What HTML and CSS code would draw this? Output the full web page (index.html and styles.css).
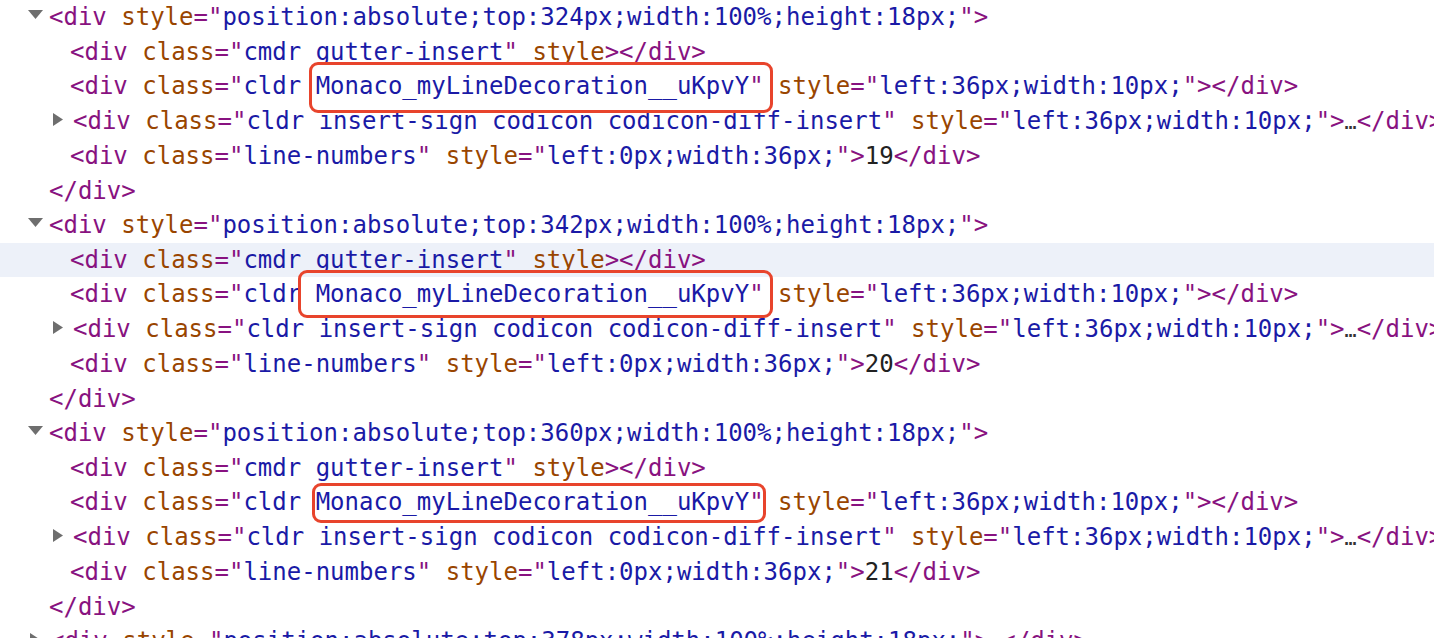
FILE: index.html
```html
<!DOCTYPE html>
<html>
<head>
    <title>Elements</title>
    <link rel="stylesheet" href="styles.css">
</head>
<body>
    <div class="tree">
        <div class="row l0"><span class="tri down"><svg width="15" height="9" viewBox="0 0 15 9"><polygon points="0,0 15,0 7.5,9"/></svg></span><span class="t">&lt;div </span><span class="an">style</span><span class="t">="</span><span class="av">position:absolute;top:324px;width:100%;height:18px;</span><span class="t">"&gt;</span></div>
        <div class="row l1"><span class="t">&lt;div </span><span class="an">class</span><span class="t">="</span><span class="av">cmdr gutter-insert</span><span class="t">"</span> <span class="an">style</span><span class="t">&gt;&lt;/div&gt;</span></div>
        <div class="row l1"><span class="t">&lt;div </span><span class="an">class</span><span class="t">="</span><span class="av">cldr </span><span class="mark m1"><span class="av">Monaco_myLineDecoration__uKpvY</span><span class="t">"</span></span> <span class="an">style</span><span class="t">="</span><span class="av">left:36px;width:10px;</span><span class="t">"&gt;&lt;/div&gt;</span></div>
        <div class="row l1x"><span class="tri right"><svg width="10" height="13" viewBox="0 0 10 13"><polygon points="0,0 10,6.5 0,13"/></svg></span><span class="t">&lt;div </span><span class="an">class</span><span class="t">="</span><span class="av">cldr insert-sign codicon codicon-diff-insert</span><span class="t">"</span> <span class="an">style</span><span class="t">="</span><span class="av">left:36px;width:10px;</span><span class="t">"&gt;</span><span class="dots">…</span><span class="t">&lt;/div&gt;</span></div>
        <div class="row l1"><span class="t">&lt;div </span><span class="an">class</span><span class="t">="</span><span class="av">line-numbers</span><span class="t">"</span> <span class="an">style</span><span class="t">="</span><span class="av">left:0px;width:36px;</span><span class="t">"&gt;</span><span class="tx">19</span><span class="t">&lt;/div&gt;</span></div>
        <div class="row l0"><span class="t">&lt;/div&gt;</span></div>

        <div class="row l0"><span class="tri down"><svg width="15" height="9" viewBox="0 0 15 9"><polygon points="0,0 15,0 7.5,9"/></svg></span><span class="t">&lt;div </span><span class="an">style</span><span class="t">="</span><span class="av">position:absolute;top:342px;width:100%;height:18px;</span><span class="t">"&gt;</span></div>
        <div class="row l1 hover"><span class="t">&lt;div </span><span class="an">class</span><span class="t">="</span><span class="av">cmdr gutter-insert</span><span class="t">"</span> <span class="an">style</span><span class="t">&gt;&lt;/div&gt;</span></div>
        <div class="row l1"><span class="t">&lt;div </span><span class="an">class</span><span class="t">="</span><span class="av">cldr </span><span class="mark m2"><span class="av">Monaco_myLineDecoration__uKpvY</span><span class="t">"</span></span> <span class="an">style</span><span class="t">="</span><span class="av">left:36px;width:10px;</span><span class="t">"&gt;&lt;/div&gt;</span></div>
        <div class="row l1x"><span class="tri right"><svg width="10" height="13" viewBox="0 0 10 13"><polygon points="0,0 10,6.5 0,13"/></svg></span><span class="t">&lt;div </span><span class="an">class</span><span class="t">="</span><span class="av">cldr insert-sign codicon codicon-diff-insert</span><span class="t">"</span> <span class="an">style</span><span class="t">="</span><span class="av">left:36px;width:10px;</span><span class="t">"&gt;</span><span class="dots">…</span><span class="t">&lt;/div&gt;</span></div>
        <div class="row l1"><span class="t">&lt;div </span><span class="an">class</span><span class="t">="</span><span class="av">line-numbers</span><span class="t">"</span> <span class="an">style</span><span class="t">="</span><span class="av">left:0px;width:36px;</span><span class="t">"&gt;</span><span class="tx">20</span><span class="t">&lt;/div&gt;</span></div>
        <div class="row l0"><span class="t">&lt;/div&gt;</span></div>

        <div class="row l0"><span class="tri down"><svg width="15" height="9" viewBox="0 0 15 9"><polygon points="0,0 15,0 7.5,9"/></svg></span><span class="t">&lt;div </span><span class="an">style</span><span class="t">="</span><span class="av">position:absolute;top:360px;width:100%;height:18px;</span><span class="t">"&gt;</span></div>
        <div class="row l1"><span class="t">&lt;div </span><span class="an">class</span><span class="t">="</span><span class="av">cmdr gutter-insert</span><span class="t">"</span> <span class="an">style</span><span class="t">&gt;&lt;/div&gt;</span></div>
        <div class="row l1"><span class="t">&lt;div </span><span class="an">class</span><span class="t">="</span><span class="av">cldr </span><span class="mark m3"><span class="av">Monaco_myLineDecoration__uKpvY</span><span class="t">"</span></span> <span class="an">style</span><span class="t">="</span><span class="av">left:36px;width:10px;</span><span class="t">"&gt;&lt;/div&gt;</span></div>
        <div class="row l1x"><span class="tri right"><svg width="10" height="13" viewBox="0 0 10 13"><polygon points="0,0 10,6.5 0,13"/></svg></span><span class="t">&lt;div </span><span class="an">class</span><span class="t">="</span><span class="av">cldr insert-sign codicon codicon-diff-insert</span><span class="t">"</span> <span class="an">style</span><span class="t">="</span><span class="av">left:36px;width:10px;</span><span class="t">"&gt;</span><span class="dots">…</span><span class="t">&lt;/div&gt;</span></div>
        <div class="row l1"><span class="t">&lt;div </span><span class="an">class</span><span class="t">="</span><span class="av">line-numbers</span><span class="t">"</span> <span class="an">style</span><span class="t">="</span><span class="av">left:0px;width:36px;</span><span class="t">"&gt;</span><span class="tx">21</span><span class="t">&lt;/div&gt;</span></div>
        <div class="row l0"><span class="t">&lt;/div&gt;</span></div>

        <div class="row l0x"><span class="tri right"><svg width="10" height="13" viewBox="0 0 10 13"><polygon points="0,0 10,6.5 0,13"/></svg></span><span class="t">&lt;div </span><span class="an">style</span><span class="t">="</span><span class="av">position:absolute;top:378px;width:100%;height:18px;</span><span class="t">"&gt;</span><span class="dots">…</span><span class="t">&lt;/div&gt;</span></div>
    </div>
</body>
</html>
```

FILE: styles.css
```css
body { margin: 0; background: #fff; overflow: hidden; }
.tree { font-family: "DejaVu Sans Mono", "Liberation Mono", monospace; font-size: 24px; line-height: 34.5px; overflow: hidden; }
.row { white-space: pre; }
.row.l0 { padding-left: 49px; }
.row.l0x { padding-left: 50px; }
.row.l1 { padding-left: 70px; }
.row.l1x { padding-left: 73px; }
.row.hover { background: #edf1f9; }

.t { color: #881280; }
.an { color: #994500; }
.av { color: #1a1aa6; }
.tx { color: #222; }
.dots { color: #333; font-size: 20px; }

.tri { display: inline-block; vertical-align: top; height: 34.5px; position: relative; }
.tri svg { fill: #6e6e6e; display: block; position: absolute; }
.tri.down { width: 21px; margin-left: -21px; }
.tri.down svg { left: 0; top: 10px; }
.tri.right { width: 20px; margin-left: -20px; }
.tri.right svg { left: 0; top: 9px; }

/* red highlight boxes drawn over the text */
.mark { position: relative; display: inline-block; }
.mark::after { content: ""; position: absolute; border: 3px solid #e8442c; border-radius: 9px; }
.mark.m1::after { left: -7px; right: -9px; top: -7px; bottom: -9px; }
.mark.m2::after { left: -18px; right: -9px; top: -7px; bottom: -6px; }
.mark.m3::after { left: -4px; right: -2px; top: -2px; bottom: -3px; }
```
